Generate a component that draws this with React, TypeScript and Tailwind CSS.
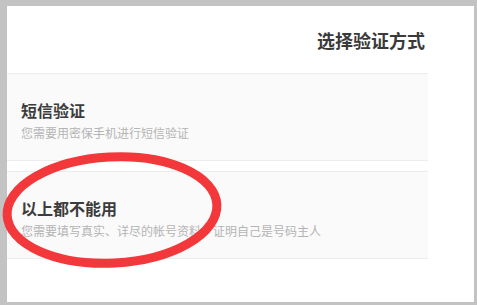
const options = [
  { id: "sms", title: "短信验证", desc: "您需要用密保手机进行短信验证" },
  { id: "none", title: "以上都不能用", desc: "您需要填写真实、详尽的帐号资料，证明自己是号码主人" },
];

export default function App() {
  return (
    <div
      className="relative h-[305px] w-[477px] overflow-hidden bg-[#c3c3c3] pb-[3px] pl-[7px] pr-[3px] pt-[6px]"
      style={{ fontFamily: '"Noto Sans CJK SC", "Noto Sans", sans-serif' }}
    >
      <div className="h-full w-full bg-white">
        <div className="w-[421px]">
          <h3 className="flex h-[67px] items-center justify-end pr-[3px] pt-[2px] text-[18px] font-bold text-[#3a3a3a]">
            选择验证方式
          </h3>
          <ul className="space-y-[10px]">
            {options.map((opt) => (
              <li
                key={opt.id}
                className="h-[88px] border-y border-[#ececec] bg-[#fafafa] px-[14px] pt-[25px]"
              >
                <div className="text-[16px] font-bold leading-[22px] text-[#3c3c3c]">{opt.title}</div>
                <div className="mt-[4px] text-[12px] leading-[16px] text-[#b4b4b4]">{opt.desc}</div>
              </li>
            ))}
          </ul>
        </div>
      </div>
      <svg className="pointer-events-none absolute left-0 top-0" width="477" height="305">
        <ellipse
          cx="112"
          cy="210"
          rx="105"
          ry="53"
          transform="rotate(-3 112 210)"
          fill="none"
          stroke="#f2383b"
          strokeWidth="9"
        />
      </svg>
    </div>
  );
}
